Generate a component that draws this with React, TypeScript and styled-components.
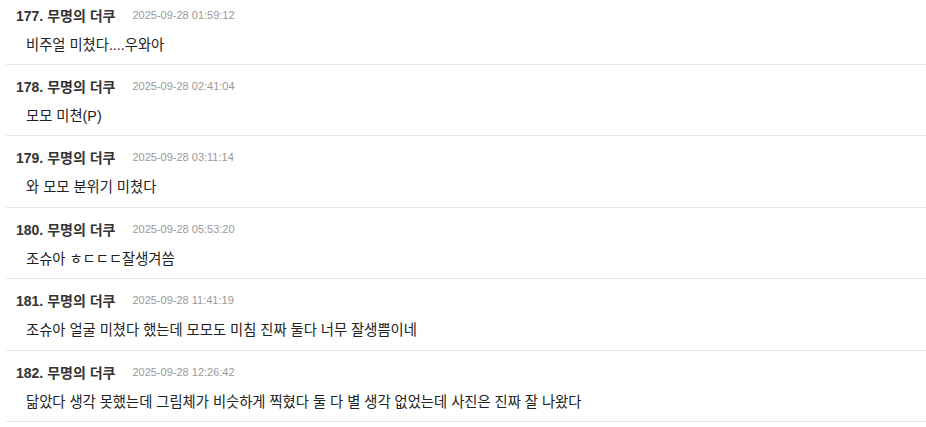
import styled, { createGlobalStyle } from "styled-components";

const GlobalStyle = createGlobalStyle`
  html, body {
    margin: 0;
    padding: 0;
    background: #ffffff;
    overflow: hidden;
  }
  body {
    font-family: "Liberation Sans", "Noto Sans CJK KR", sans-serif;
  }
`;

type Comment = {
  no: number;
  author: string;
  date: string;
  text: string;
};

const comments: Comment[] = [
  { no: 177, author: "무명의 더쿠", date: "2025-09-28 01:59:12", text: "비주얼 미쳤다....우와아" },
  { no: 178, author: "무명의 더쿠", date: "2025-09-28 02:41:04", text: "모모 미쳔(P)" },
  { no: 179, author: "무명의 더쿠", date: "2025-09-28 03:11:14", text: "와 모모 분위기 미쳤다" },
  { no: 180, author: "무명의 더쿠", date: "2025-09-28 05:53:20", text: "조슈아 ㅎㄷㄷㄷ잘생겨씀" },
  { no: 181, author: "무명의 더쿠", date: "2025-09-28 11:41:19", text: "조슈아 얼굴 미쳤다 했는데 모모도 미침 진짜 둘다 너무 잘생쁨이네" },
  {
    no: 182,
    author: "무명의 더쿠",
    date: "2025-09-28 12:26:42",
    text: "닮았다 생각 못했는데 그림체가 비슷하게 찍혔다 둘 다 별 생각 없었는데 사진은 진짜 잘 나왔다",
  },
];

const List = styled.ul`
  list-style: none;
  margin: -6.4px 0 0 6px;
  padding: 0;
`;

const Row = styled.li`
  padding: 10px 0 8.4px 10px;
  border-bottom: 1px solid #e8e8e8;
`;

const Header = styled.div`
  display: flex;
  align-items: center;
  height: 22px;
`;

const Author = styled.span`
  font-size: 14px;
  font-weight: bold;
  color: #333333;
`;

const Stamp = styled.span`
  margin-left: 17px;
  font-size: 11px;
  color: #999999;
`;

const Body = styled.p`
  margin: 8px 0 0 10px;
  font-size: 14.3px;
  line-height: 22px;
  color: #222222;
`;

export default function App() {
  return (
    <>
      <GlobalStyle />
      <List>
        {comments.map((c) => (
          <Row key={c.no}>
            <Header>
              <Author>
                {c.no}. {c.author}
              </Author>
              <Stamp>{c.date}</Stamp>
            </Header>
            <Body>{c.text}</Body>
          </Row>
        ))}
      </List>
    </>
  );
}
